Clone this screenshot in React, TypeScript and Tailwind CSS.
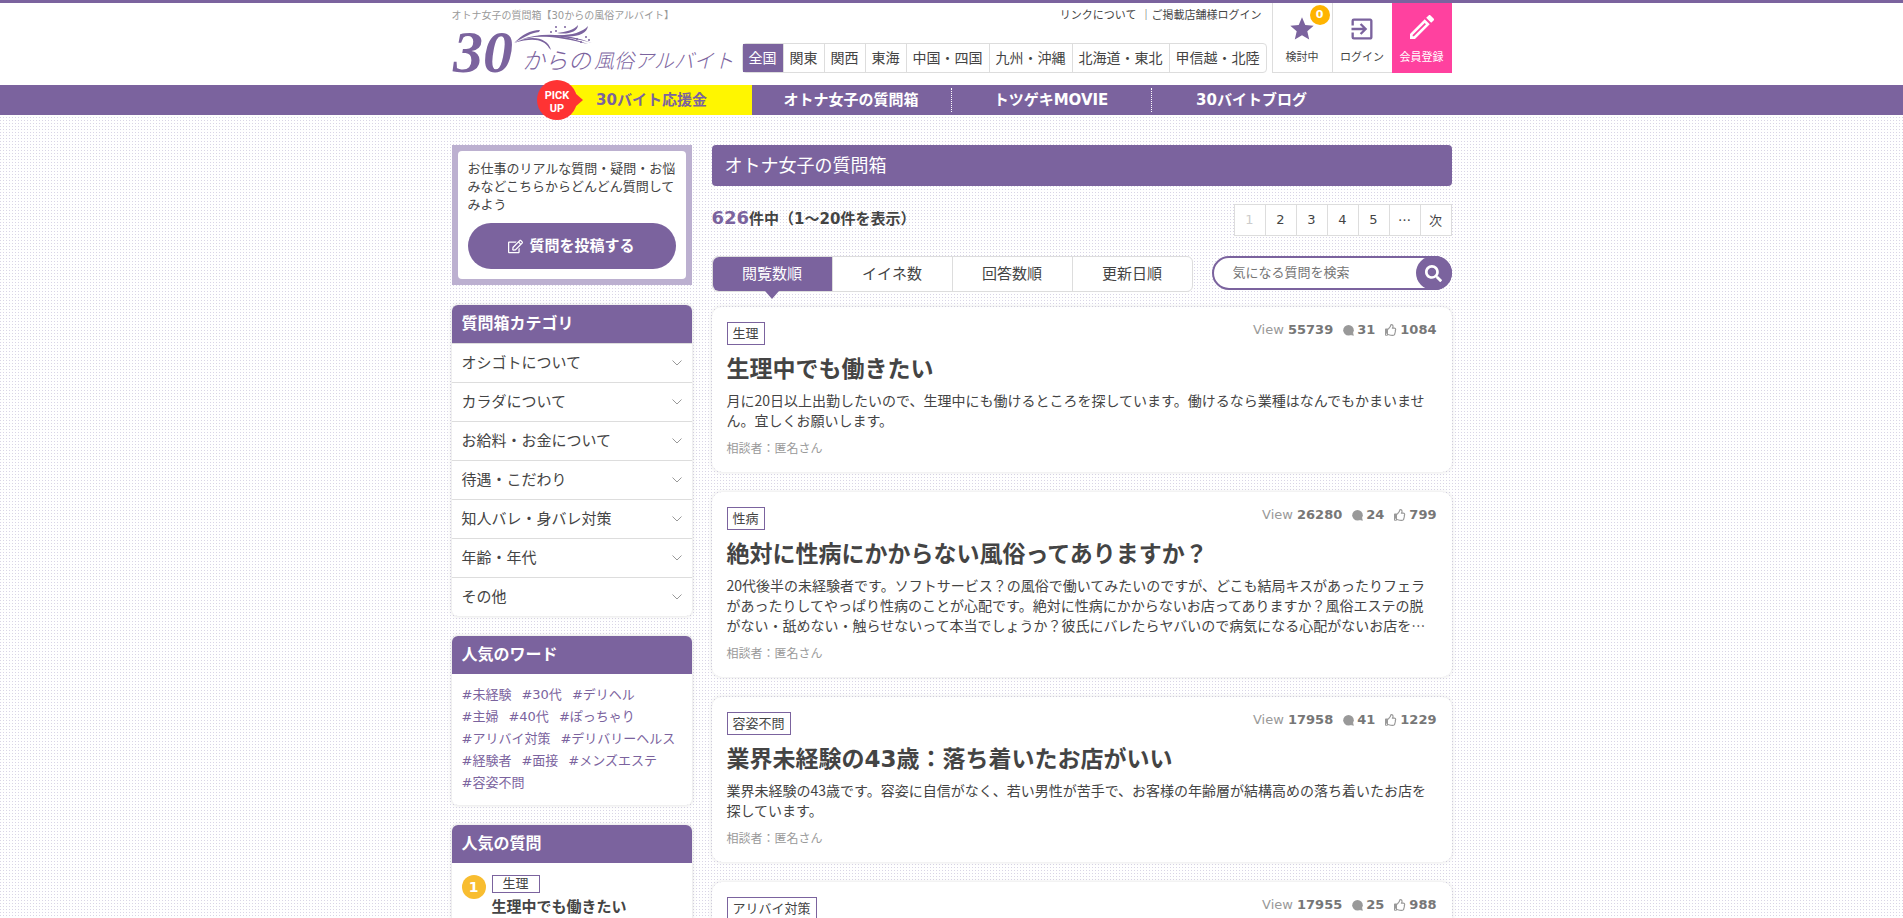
import React from 'react';
import { FaRegEdit, FaRegThumbsUp, FaSearch } from 'react-icons/fa';
import { MdExitToApp, MdOutlineEdit, MdStar } from 'react-icons/md';

interface Question {
  tag: string;
  title?: string;
  body?: string;
  view: number;
  answer: number;
  like: number;
}

const areas = ['全国', '関東', '関西', '東海', '中国・四国', '九州・沖縄', '北海道・東北', '甲信越・北陸'];

const navItems = ['オトナ女子の質問箱', 'トツゲキMOVIE', '30バイトブログ'];

const categories = [
  'オシゴトについて',
  'カラダについて',
  'お給料・お金について',
  '待遇・こだわり',
  '知人バレ・身バレ対策',
  '年齢・年代',
  'その他',
];

const words = [
  '未経験',
  '30代',
  'デリヘル',
  '主婦',
  '40代',
  'ぽっちゃり',
  'アリバイ対策',
  'デリバリーヘルス',
  '経験者',
  '面接',
  'メンズエステ',
  '容姿不問',
];

const pages = ['1', '2', '3', '4', '5', '…', '次'];

const tabs = ['閲覧数順', 'イイネ数', '回答数順', '更新日順'];

const questions: Question[] = [
  {
    tag: '生理',
    title: '生理中でも働きたい',
    body: '月に20日以上出勤したいので、生理中にも働けるところを探しています。働けるなら業種はなんでもかまいません。宜しくお願いします。',
    view: 55739,
    answer: 31,
    like: 1084,
  },
  {
    tag: '性病',
    title: '絶対に性病にかからない風俗ってありますか？',
    body: '20代後半の未経験者です。ソフトサービス？の風俗で働いてみたいのですが、どこも結局キスがあったりフェラがあったりしてやっぱり性病のことが心配です。絶対に性病にかからないお店ってありますか？風俗エステの脱がない・舐めない・触らせないって本当でしょうか？彼氏にバレたらヤバいので病気になる心配がないお店を…',
    view: 26280,
    answer: 24,
    like: 799,
  },
  {
    tag: '容姿不問',
    title: '業界未経験の43歳：落ち着いたお店がいい',
    body: '業界未経験の43歳です。容姿に自信がなく、若い男性が苦手で、お客様の年齢層が結構高めの落ち着いたお店を探しています。',
    view: 17958,
    answer: 41,
    like: 1229,
  },
  { tag: 'アリバイ対策', view: 17955, answer: 25, like: 988 },
];

function Logo() {
  return (
    <svg
      className="h-[50px] w-[284px] shrink-0 overflow-visible"
      viewBox="0 0 284 50"
      fill="#7b639e"
      role="img"
      aria-label="30からの風俗アルバイト"
    >
      <text x="1" y="48" fontFamily="'Liberation Serif', serif" fontStyle="italic" fontWeight="bold" fontSize="60">
        30
      </text>
      <g fontFamily="'Noto Sans CJK JP', sans-serif" fontStyle="italic" fontWeight="300">
        <text x="70" y="45" fontSize="23">からの</text>
        <text x="142" y="44" fontSize="20">風俗アルバイト</text>
      </g>
      {/* 飾りの枝 */}
      <path d="M62 19 C70 11 78 6 88 6 L87 8 C79 9 72 13 62 19Z" />
      <path d="M62 19 C80 10 96 14 99 26 L97 24 C92 16 82 13 62 19Z" />
      <path d="M68 16 C92 7 118 11 140 19 C118 13 94 9 68 16Z" />
      <path d="M80 13 C98 8 120 14 136 20 C118 16 98 11 80 13Z" />
      <path d="M103 11 C116 12 130 9 136 2 C135 11 121 15 103 11Z" />
      <path d="M105 9 C114 8 122 6 126 1 C126 8 115 11 105 9Z" />
      <circle cx="99" cy="8" r="1" />
      <circle cx="104" cy="7" r="1" />
      <circle cx="104" cy="3" r="1" />
      <circle cx="113" cy="3" r="1" />
      <circle cx="125" cy="15" r="1" />
      <circle cx="134" cy="13" r="1" />
      <circle cx="129" cy="18" r="1" />
      <circle cx="137" cy="16" r="1" />
    </svg>
  );
}

function Header() {
  return (
    <header className="border-t-[3px] border-[#7b639e] bg-white">
      <div className="mx-auto flex h-[82px] max-w-[1000px]">
        <div className="flex-1">
          <div className="flex h-[21px] items-end justify-between leading-4">
            <p className="text-[10px] text-[#999]">オトナ女子の質問箱【30からの風俗アルバイト】</p>
            <p className="mr-2.5 text-[11px]">
              <a href="#link">リンクについて</a>
              <span className="ml-1">｜</span>
              <a href="#shop">ご掲載店舗様ログイン</a>
            </p>
          </div>
          <div className="mr-[5px] flex items-end justify-between">
            <a href="#top">
              <Logo />
            </a>
            <nav className="mb-px flex rounded-sm border border-[#ddd] bg-white text-[14px]">
              {areas.map((area, index) => (
                <a
                  key={area}
                  href="#area"
                  className={
                    index === 0
                      ? 'bg-[#7b639e] px-1.5 leading-7 text-white'
                      : 'border-l border-[#ddd] px-1.5 leading-7'
                  }
                >
                  {area}
                </a>
              ))}
            </nav>
          </div>
        </div>
        <div className="flex h-[70px] text-[11px] leading-4">
          <a href="#keep" className="relative flex w-[60px] flex-col items-center border-b border-l border-[#ddd] pt-3">
            <MdStar className="size-7 text-[#7b639e]" />
            <span className="mt-[7px]">検討中</span>
            <span className="absolute top-0.5 right-0.5 size-5 rounded-full bg-[#ffb400] text-center leading-5 font-bold text-white">
              0
            </span>
          </a>
          <a href="#login" className="flex w-[60px] flex-col items-center border-b border-l border-[#ddd] pt-3">
            <MdExitToApp className="size-7 text-[#7b639e]" />
            <span className="mt-[7px]">ログイン</span>
          </a>
          <a href="#entry" className="flex w-[60px] flex-col items-center bg-[#ff419f] pt-2 text-white">
            <MdOutlineEdit className="size-8" />
            <span className="mt-[7px]">会員登録</span>
          </a>
        </div>
      </div>
    </header>
  );
}

function GlobalNav() {
  return (
    <nav className="bg-[#7b639e] text-[15px] font-bold text-white">
      <div className="mx-auto grid h-[30px] max-w-[800px] grid-cols-4 text-center leading-[30px]">
        <a href="#bonus" className="relative bg-[#fff600] text-[#7b639e]">
          30バイト応援金
          <svg className="absolute -top-[5px] -left-[15px] h-10 w-[47px]" viewBox="0 0 47 40" aria-hidden="true">
            <circle cx="20" cy="20" r="20" fill="#ff3333" />
            <path d="M38 13 L46 20 L38 27Z" fill="#ff3333" />
            <g fill="#fff" fontFamily="Roboto, sans-serif" fontWeight="bold" fontSize="11" textAnchor="middle">
              <text x="20" y="19">PICK</text>
              <text x="20" y="32">UP</text>
            </g>
          </svg>
        </a>
        {navItems.map((item, index) => (
          <a key={item} href="#nav" className="flex items-center">
            <span className="flex-1">{item}</span>
            {index < navItems.length - 1 && <span className="h-6 border-l border-dotted border-white" />}
          </a>
        ))}
      </div>
    </nav>
  );
}

function SideBox({ title, children }: { title: string; children: React.ReactNode }) {
  return (
    <section className="mt-5 overflow-hidden rounded-md bg-white shadow-[0_0_4px_rgba(0,0,0,0.15)]">
      <h2 className="bg-[#7b639e] px-2.5 text-[16px] leading-[38px] font-bold text-white">{title}</h2>
      {children}
    </section>
  );
}

function Sidebar() {
  return (
    <aside className="w-60 shrink-0">
      <div className="bg-[#bcb0d0] p-1.5">
        <div className="rounded-[4px] bg-white p-2.5 pt-[9px]">
          <p className="text-[13px] leading-[18px]">
            お仕事のリアルな質問・疑問・お悩みなどこちらからどんどん質問してみよう
          </p>
          <a
            href="#post"
            className="mt-[9px] flex h-[46px] items-center justify-center gap-1.5 rounded-full bg-[#7b639e] text-[15px] font-bold text-white"
          >
            <FaRegEdit />
            質問を投稿する
          </a>
        </div>
      </div>

      <SideBox title="質問箱カテゴリ">
        <ul className="text-[15px]">
          {categories.map((category) => (
            <li key={category} className="border-t border-[#ddd]">
              <button type="button" className="flex w-full items-center justify-between px-2.5 leading-[38px]">
                {category}
                <svg className="h-1.5 w-2.5" viewBox="0 0 10 6" fill="none" stroke="#999" aria-hidden="true">
                  <path d="M0.5 0.5 L5 5 L9.5 0.5" />
                </svg>
              </button>
            </li>
          ))}
        </ul>
      </SideBox>

      <SideBox title="人気のワード">
        <ul className="flex flex-wrap gap-x-2.5 px-2.5 pt-2.5 pb-[11px] text-[13px] leading-[22px] text-[#7b639e]">
          {words.map((word) => (
            <li key={word}>
              <a href="#word">#{word}</a>
            </li>
          ))}
        </ul>
      </SideBox>

      <SideBox title="人気の質問">
        <div className="flex gap-1.5 px-2.5 py-3">
          <span className="size-6 rounded-full bg-[#f8bd30] text-center text-[14px] leading-6 font-bold text-white">1</span>
          <div>
            <span className="block w-12 border border-[#7b639e] text-center text-[13px] leading-4">生理</span>
            <a href="#q1" className="mt-1 block text-[15px] leading-5 font-bold">
              生理中でも働きたい
            </a>
          </div>
        </div>
      </SideBox>
    </aside>
  );
}

function QuestionCard({ question }: { question: Question }) {
  return (
    <article className="rounded-[10px] bg-white px-[15px] pt-[15px] pb-[13px] shadow-[0_0_4px_rgba(0,0,0,0.12)]">
      <div className="flex items-start justify-between">
        <span className="border border-[#7b639e] px-[5px] text-[13px] leading-[21px]">{question.tag}</span>
        <div className="flex gap-2.5 text-[13px] leading-4 text-[#999]">
          <span>
            View <b className="text-[#777]">{question.view}</b>
          </span>
          <span className="flex items-center gap-[3px]">
            <svg className="size-[11px]" viewBox="0 0 11 11" fill="currentColor" aria-hidden="true">
              <circle cx="5.5" cy="5.3" r="5.3" />
              <path d="M7.5 10 L10.8 10.8 L10 7.5Z" />
            </svg>
            <b className="text-[#777]">{question.answer}</b>
          </span>
          <span className="flex items-center gap-[3px]">
            <FaRegThumbsUp className="size-3" />
            <b className="text-[#777]">{question.like}</b>
          </span>
        </div>
      </div>
      {question.title && (
        <>
          <h2 className="mt-2 text-[23px] leading-8 font-bold">
            <a href="#question">{question.title}</a>
          </h2>
          <p className="mt-[5px] font-['Noto_Sans_CJK_JP',sans-serif] text-[14px] leading-5">{question.body}</p>
          <p className="mt-[9px] text-[12px] leading-5 text-[#999]">相談者：匿名さん</p>
        </>
      )}
    </article>
  );
}

function Main() {
  return (
    <main className="min-w-0 flex-1">
      <h1 className="rounded-[4px] bg-[#7b639e] px-[13px] text-[18px] leading-[41px] text-white">オトナ女子の質問箱</h1>

      <div className="mt-[18px] flex items-center justify-between">
        <p className="pb-1 text-[15px] leading-6 font-bold">
          <span className="text-[18px] text-[#7b639e]">626</span>件中（1〜20件を表示）
        </p>
        <nav className="flex border border-[#ddd] bg-white text-[13px]">
          {pages.map((page, index) => (
            <a
              key={page}
              href="#page"
              className={
                index === 0
                  ? 'w-[30px] text-center leading-[30px] text-[#ccc]'
                  : "w-[31px] border-l border-[#ddd] text-center leading-[30px] last:font-['Noto_Sans_CJK_JP',sans-serif] nth-[6]:font-['Noto_Sans_CJK_JP',sans-serif]"
              }
            >
              {page}
            </a>
          ))}
        </nav>
      </div>

      <div className="mt-5 flex items-start justify-between">
        <div className="flex rounded-md border border-[#ddd] bg-white text-[15px]">
          {tabs.map((tab, index) =>
            index === 0 ? (
              <button key={tab} type="button" className="relative w-[119px] rounded-l-md bg-[#7b639e] leading-[34px] text-white">
                {tab}
                <span className="absolute top-full left-1/2 -translate-x-1/2 border-x-[7px] border-t-8 border-x-transparent border-t-[#7b639e]" />
              </button>
            ) : (
              <button key={tab} type="button" className="w-[120px] border-l border-[#ddd] leading-[34px]">
                {tab}
              </button>
            ),
          )}
        </div>
        <form className="flex h-[34px] w-60 rounded-full border-2 border-[#7b639e] bg-white">
          <input
            type="text"
            aria-label="気になる質問を検索"
            placeholder="気になる質問を検索"
            className="min-w-0 flex-1 pl-[19px] text-[13px] outline-none placeholder:text-[#757575]"
          />
          <button
            type="button"
            aria-label="検索"
            className="-my-0.5 -mr-0.5 flex w-9 items-center justify-center rounded-full bg-[#7b639e] text-white"
          >
            <FaSearch className="size-[17px]" />
          </button>
        </form>
      </div>

      <div className="mt-[15px] flex flex-col gap-5">
        {questions.map((question) => (
          <QuestionCard key={question.tag} question={question} />
        ))}
      </div>
    </main>
  );
}

export default function App() {
  return (
    <div
      lang="ja"
      className="min-h-screen bg-[#d9d5e6] bg-[linear-gradient(90deg,transparent_1px,#fff_1px),linear-gradient(transparent_1px,#fff_1px)] bg-[length:3px_3px] font-['DejaVu_Sans','Noto_Sans_CJK_JP',sans-serif] text-[#444]"
    >
      <Header />
      <GlobalNav />
      <div className="mx-auto mt-[30px] flex max-w-[1000px] gap-5">
        <Sidebar />
        <Main />
      </div>
    </div>
  );
}
